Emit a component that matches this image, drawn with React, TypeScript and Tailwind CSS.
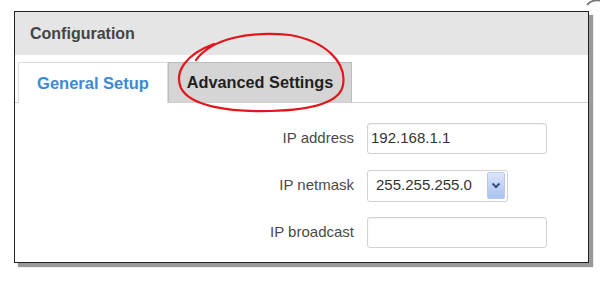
export default function App() {
  const font = { fontFamily: '"Liberation Sans", Arial, sans-serif' };

  return (
    <div className="relative w-[600px] h-[289px] bg-white overflow-hidden pt-[11px] pl-[14px]" style={font}>
      {/* panel */}
      <div className="w-[575px] h-[252px] border border-[#222] shadow-[4px_4px_1px_#999] bg-white flex flex-col">
        {/* Header */}
        <div className="h-[43px] bg-[#e5e5e5] flex items-center pl-[15px]">
          <span className="text-[16px] font-bold text-[#444]">Configuration</span>
        </div>

        {/* Tabs */}
        <div className="mt-[7px] h-[41px] flex items-end pl-[3px] border-b border-[#cfcfcf]">
          <div className="w-[150px] h-[41px] -mb-px bg-white border border-b-0 border-[#dcdcdc] flex items-center justify-center">
            <span className="text-[16.5px] font-bold text-[#3a8bd3]">General Setup</span>
          </div>
          <div className="w-[184px] h-[40px] bg-[#d5d5d5] border border-b-0 border-[#bcbcbc] flex items-center justify-center">
            <span className="text-[16.3px] font-bold text-[#1f1f1f]">Advanced Settings</span>
          </div>
        </div>

        {/* Form */}
        <div className="pt-[20px] flex flex-col gap-[16px]">
          <div className="flex items-center h-[31px]">
            <div className="w-[339px] text-right text-[15px] text-[#4a4a4a]">IP address</div>
            <div className="ml-[13px] w-[180px] h-[31px] border border-[#d2d2d2] rounded-[3px] shadow-[inset_0_1px_2px_rgba(0,0,0,0.06)] flex items-center pl-[3px] text-[15px] text-[#333]">
              192.168.1.1
            </div>
          </div>

          <div className="flex items-center h-[31px]">
            <div className="w-[339px] text-right text-[15px] text-[#4a4a4a]">IP netmask</div>
            <div className="ml-[13px] w-[141px] h-[32px] border border-[#d2d2d2] rounded-[3px] flex items-center justify-between pl-[8px] pr-[2px] text-[15px] text-[#333]">
              <span>255.255.255.0</span>
              <div className="w-[18px] h-[27px] rounded-[2px] border border-[#b7c8e8] bg-gradient-to-b from-[#dbe6fa] to-[#a9c1ee] flex items-center justify-center">
                <svg width="10" height="7" viewBox="0 0 10 7">
                  <path d="M1.5 1.5 L5 5 L8.5 1.5" fill="none" stroke="#3b4f80" strokeWidth="2" />
                </svg>
              </div>
            </div>
          </div>

          <div className="flex items-center h-[31px]">
            <div className="w-[339px] text-right text-[15px] text-[#4a4a4a]">IP broadcast</div>
            <div className="ml-[13px] w-[180px] h-[31px] border border-[#d2d2d2] rounded-[3px] shadow-[inset_0_1px_2px_rgba(0,0,0,0.06)]" />
          </div>
        </div>
      </div>

      {/* red hand-drawn circle */}
      <svg className="absolute left-0 top-0 pointer-events-none" width="600" height="289" viewBox="0 0 600 289">
        <path
          d="M196 60 C 212 38, 250 31, 290 35 C 325 41, 347 62, 343 85 C 340 103, 312 110, 270 111 C 228 112, 190 106, 181 88 C 174 72, 186 54, 214 44"
          fill="none"
          stroke="#e3161b"
          strokeWidth="2.2"
          strokeLinecap="round"
        />
      </svg>

      {/* corner artifact top right */}
      <svg className="absolute right-0 top-0" width="14" height="6" viewBox="0 0 14 6">
        <path d="M1 5 C 4 1, 9 0, 14 0.5" fill="none" stroke="#777" strokeWidth="2" />
      </svg>
    </div>
  );
}
